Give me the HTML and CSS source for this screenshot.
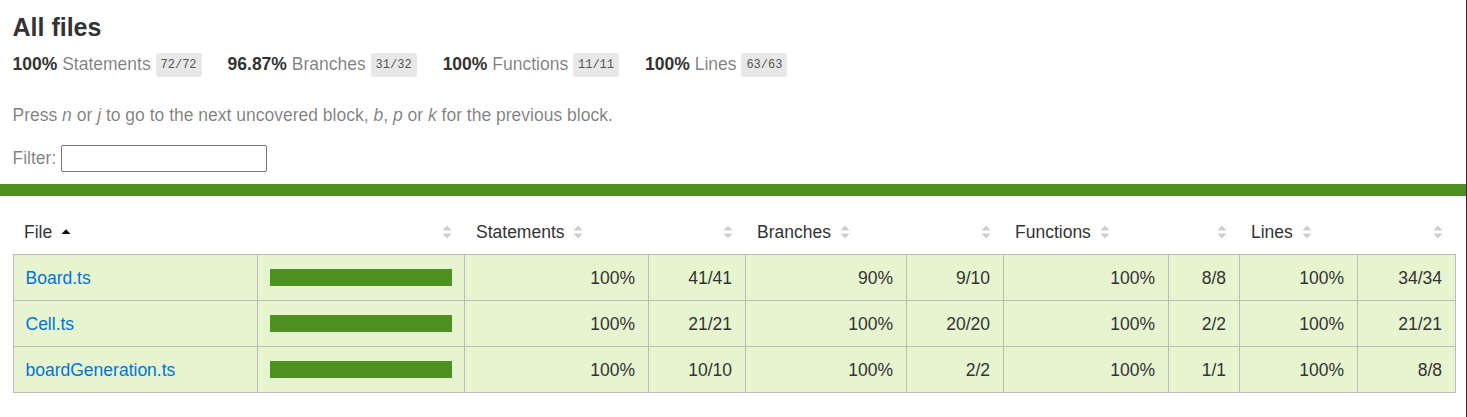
FILE: index.html
```html
<!DOCTYPE html>
<html lang="en">
<head>
<meta charset="utf-8">
<title>Code coverage report for All files</title>
<link rel="stylesheet" href="styles.css">
</head>
<body>
<div class="page">
  <header class="top">
    <h1>All files</h1>
    <div class="summary">
      <div class="metric"><span class="strong">100%</span> <span class="quiet">Statements</span> <span class="fraction">72/72</span></div>
      <div class="metric"><span class="strong">96.87%</span> <span class="quiet">Branches</span> <span class="fraction">31/32</span></div>
      <div class="metric"><span class="strong">100%</span> <span class="quiet">Functions</span> <span class="fraction">11/11</span></div>
      <div class="metric"><span class="strong">100%</span> <span class="quiet">Lines</span> <span class="fraction">63/63</span></div>
    </div>
    <p class="quiet hint">Press <em>n</em> or <em>j</em> to go to the next uncovered block, <em>b</em>, <em>p</em> or <em>k</em> for the previous block.</p>
    <div class="quiet filter"><span>Filter:</span><input type="search" class="search" aria-label="Filter"></div>
  </header>
  <div class="status-line"></div>
  <div class="table-wrap">
    <table class="coverage-summary">
      <colgroup>
        <col class="c-file"><col class="c-pic"><col class="c-spct"><col class="c-sabs"><col class="c-bpct"><col class="c-babs"><col class="c-fpct"><col class="c-fabs"><col class="c-lpct"><col class="c-labs">
      </colgroup>
      <thead>
        <tr>
          <th class="file">File<svg class="sorter" viewBox="0 0 10 14" width="10" height="14"><path d="M5 4.2 L9.6 9 L0.4 9 Z" fill="#111"/></svg></th>
          <th class="pic"><svg class="sorter" viewBox="0 0 10 14" width="10" height="14"><path d="M5 0.5 L9.5 5.5 L0.5 5.5 Z M0.5 8.5 L9.5 8.5 L5 13.5 Z" fill="#cdcdcd"/></svg></th>
          <th class="pct">Statements<svg class="sorter" viewBox="0 0 10 14" width="10" height="14"><path d="M5 0.5 L9.5 5.5 L0.5 5.5 Z M0.5 8.5 L9.5 8.5 L5 13.5 Z" fill="#cdcdcd"/></svg></th>
          <th class="abs"><svg class="sorter" viewBox="0 0 10 14" width="10" height="14"><path d="M5 0.5 L9.5 5.5 L0.5 5.5 Z M0.5 8.5 L9.5 8.5 L5 13.5 Z" fill="#cdcdcd"/></svg></th>
          <th class="pct">Branches<svg class="sorter" viewBox="0 0 10 14" width="10" height="14"><path d="M5 0.5 L9.5 5.5 L0.5 5.5 Z M0.5 8.5 L9.5 8.5 L5 13.5 Z" fill="#cdcdcd"/></svg></th>
          <th class="abs"><svg class="sorter" viewBox="0 0 10 14" width="10" height="14"><path d="M5 0.5 L9.5 5.5 L0.5 5.5 Z M0.5 8.5 L9.5 8.5 L5 13.5 Z" fill="#cdcdcd"/></svg></th>
          <th class="pct">Functions<svg class="sorter" viewBox="0 0 10 14" width="10" height="14"><path d="M5 0.5 L9.5 5.5 L0.5 5.5 Z M0.5 8.5 L9.5 8.5 L5 13.5 Z" fill="#cdcdcd"/></svg></th>
          <th class="abs"><svg class="sorter" viewBox="0 0 10 14" width="10" height="14"><path d="M5 0.5 L9.5 5.5 L0.5 5.5 Z M0.5 8.5 L9.5 8.5 L5 13.5 Z" fill="#cdcdcd"/></svg></th>
          <th class="pct">Lines<svg class="sorter" viewBox="0 0 10 14" width="10" height="14"><path d="M5 0.5 L9.5 5.5 L0.5 5.5 Z M0.5 8.5 L9.5 8.5 L5 13.5 Z" fill="#cdcdcd"/></svg></th>
          <th class="abs"><svg class="sorter" viewBox="0 0 10 14" width="10" height="14"><path d="M5 0.5 L9.5 5.5 L0.5 5.5 Z M0.5 8.5 L9.5 8.5 L5 13.5 Z" fill="#cdcdcd"/></svg></th>
        </tr>
      </thead>
      <tbody>
        <tr>
          <td class="file"><a href="#">Board.ts</a></td>
          <td class="pic"><div class="chart"><div class="cover-fill"></div></div></td>
          <td class="pct">100%</td><td class="abs">41/41</td>
          <td class="pct">90%</td><td class="abs">9/10</td>
          <td class="pct">100%</td><td class="abs">8/8</td>
          <td class="pct">100%</td><td class="abs">34/34</td>
        </tr>
        <tr>
          <td class="file"><a href="#">Cell.ts</a></td>
          <td class="pic"><div class="chart"><div class="cover-fill"></div></div></td>
          <td class="pct">100%</td><td class="abs">21/21</td>
          <td class="pct">100%</td><td class="abs">20/20</td>
          <td class="pct">100%</td><td class="abs">2/2</td>
          <td class="pct">100%</td><td class="abs">21/21</td>
        </tr>
        <tr>
          <td class="file"><a href="#">boardGeneration.ts</a></td>
          <td class="pic"><div class="chart"><div class="cover-fill"></div></div></td>
          <td class="pct">100%</td><td class="abs">10/10</td>
          <td class="pct">100%</td><td class="abs">2/2</td>
          <td class="pct">100%</td><td class="abs">1/1</td>
          <td class="pct">100%</td><td class="abs">8/8</td>
        </tr>
      </tbody>
    </table>
  </div>
</div>
</body>
</html>
```

FILE: styles.css
```css
*, *::before, *::after { box-sizing: border-box; }

html, body {
  margin: 0;
  padding: 0;
  background: #fff;
}

body {
  font-family: "Liberation Sans", Arial, sans-serif;
  font-size: 17.5px;
  color: #333;
}

.page {
  width: 1467px;
  min-height: 417px;
  border-right: 1px solid #2b2b2b;
}

.top {
  padding: 12.5px 12.5px 12px 12.5px;
}

h1 {
  font-size: 25px;
  margin: 0;
  font-weight: bold;
}

.summary {
  display: flex;
  gap: 26px;
  padding: 12.5px 0;
}

.strong { font-weight: bold; }

.quiet { color: rgba(0, 0, 0, 0.5); }

.fraction {
  font-family: "Liberation Mono", Consolas, monospace;
  font-size: 12px;
  color: #555;
  background: #e8e8e8;
  padding: 5px 5px;
  border-radius: 3px;
  vertical-align: middle;
}

.hint {
  margin: 17px 0 0 0;
}

.filter {
  display: flex;
  align-items: center;
  gap: 5px;
  margin-top: 19px;
}

.search {
  width: 206px;
  height: 27px;
  margin: 0;
  border: 1px solid #767676;
  border-radius: 2px;
  padding: 1px 2px;
  font-size: 16px;
  background: #fff;
}

.status-line {
  height: 12px;
  background: rgb(77, 146, 33);
}

.table-wrap {
  padding: 12px 11px 12px 13px;
}

.coverage-summary {
  border-collapse: separate;
  border-spacing: 0;
  table-layout: fixed;
  width: 1443px;
}

.c-file { width: 245px; }
.c-pic { width: 207px; }
.c-spct { width: 184px; }
.c-sabs { width: 97px; }
.c-bpct { width: 161px; }
.c-babs { width: 97px; }
.c-fpct { width: 165px; }
.c-fabs { width: 71px; }
.c-lpct { width: 118px; }
.c-labs { width: 98px; }

.coverage-summary th {
  text-align: left;
  font-weight: normal;
  white-space: nowrap;
  line-height: 21px;
  padding: 14px 13px 11px 11px;
}

.coverage-summary th.pic,
.coverage-summary th.abs,
.coverage-summary td.pct,
.coverage-summary td.abs {
  text-align: right;
}

.sorter {
  display: inline-block;
  margin-left: 8.75px;
  vertical-align: -1px;
}

.coverage-summary td {
  background: rgb(230, 245, 208);
  line-height: 21px;
  padding: 13px 13px 11px 11.5px;
  border-right: 1px solid #bbb;
  border-bottom: 1px solid #bbb;
  white-space: nowrap;
}

.coverage-summary tbody tr:first-child td { border-top: 1px solid #bbb; }
.coverage-summary td:first-child { border-left: 1px solid #bbb; }

.coverage-summary td.pic {
  padding-left: 12px;
  padding-right: 12px;
}

.chart {
  line-height: 0;
  margin-top: -1px;
}

.cover-fill {
  height: 17px;
  width: 100%;
  background: rgb(77, 146, 33);
}

a {
  color: #0074d9;
  text-decoration: none;
}
```
